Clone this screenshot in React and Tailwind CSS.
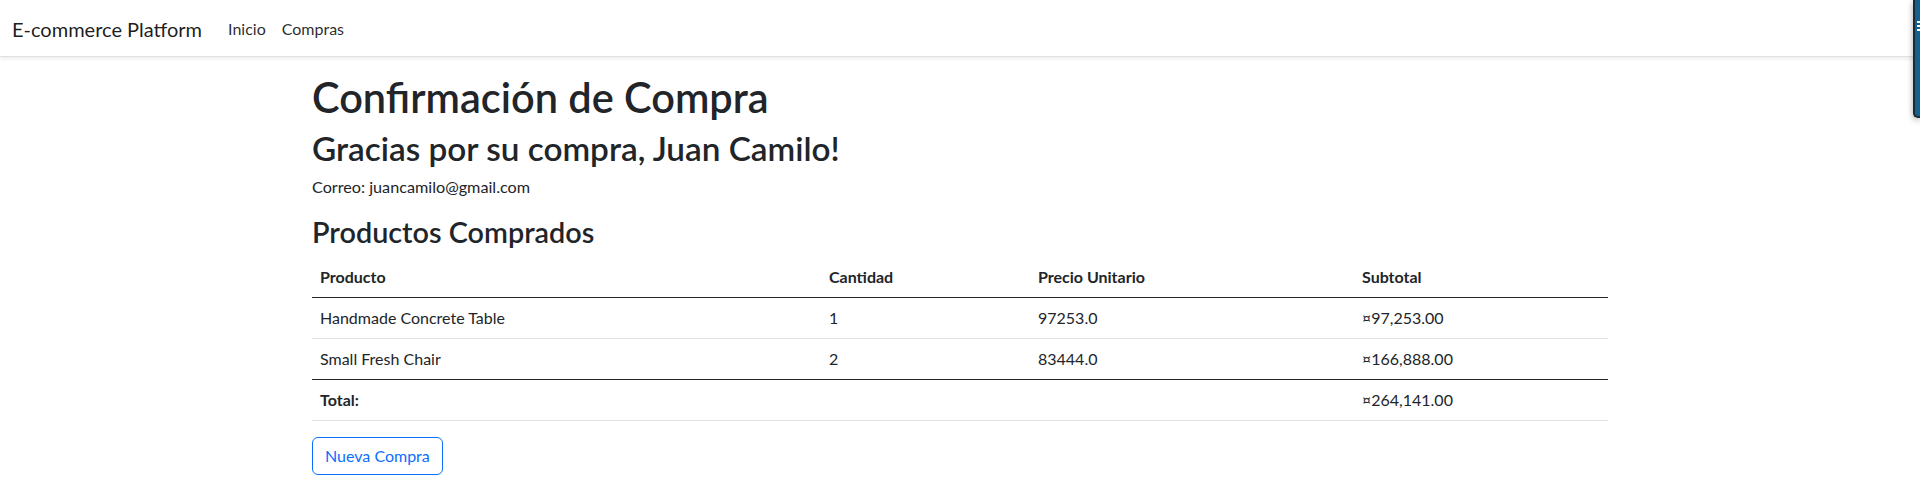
import React from 'react';

const items = [
    { name: 'Handmade Concrete Table', qty: 1, price: '97253.0', subtotal: '¤97,253.00' },
    { name: 'Small Fresh Chair', qty: 2, price: '83444.0', subtotal: '¤166,888.00' },
];

function Navbar() {
    return (
        <nav className="h-[57px] bg-white border-b border-[#dee2e6] shadow-[0_0.125rem_0.25rem_rgba(0,0,0,0.075)] relative z-10">
            <div className="h-full px-3 pt-[2px] flex items-center">
                <a className="text-[20px] text-[rgba(0,0,0,0.9)] mr-[18px] leading-[30px]">E-commerce Platform</a>
                <a className="text-[16px] text-[rgba(0,0,0,0.85)] px-2">Inicio</a>
                <a className="text-[16px] text-[rgba(0,0,0,0.85)] px-2">Compras</a>
            </div>
        </nav>
    );
}

function App() {
    return (
        <div className="min-h-[495px] bg-white text-[#212529] relative overflow-hidden" style={{ fontFamily: 'Lato, "Noto Sans", sans-serif' }}>
            <Navbar />

            {/* extension tab in the corner */}
            <div className="absolute top-0 right-0 w-[7px] h-[118px] bg-[#11608f] border-l-2 border-b-2 border-[#1b2a33] rounded-bl-[5px] shadow-[0_2px_6px_rgba(0,0,0,0.35)] z-20">
                <div className="mt-[21px] ml-[2px] flex flex-col gap-[2px]">
                    <div className="h-[2px] w-[4px] bg-white" />
                    <div className="h-[2px] w-[4px] bg-white" />
                    <div className="h-[2px] w-[4px] bg-white" />
                </div>
            </div>

            <main className="w-[1320px] mx-auto px-3 pt-[16px]">
                <h1 className="text-[41.5px] leading-[48px] font-semibold mb-2">Confirmación de Compra</h1>
                <h2 className="text-[33.3px] leading-[38px] font-semibold mb-2">Gracias por su compra, Juan Camilo!</h2>
                <p className="text-[16.2px] leading-6 mb-4">Correo: juancamilo@gmail.com</p>

                <h3 className="text-[28.8px] leading-[34px] font-semibold mb-2">Productos Comprados</h3>
                <table className="w-full text-[16px] leading-6 mb-4 border-collapse">
                    <thead>
                        <tr className="border-b border-[#212529]">
                            <th className="text-left font-bold px-2 py-2 w-[509px]">Producto</th>
                            <th className="text-left font-bold px-2 py-2 w-[209px]">Cantidad</th>
                            <th className="text-left font-bold px-2 py-2 w-[324px]">Precio Unitario</th>
                            <th className="text-left font-bold px-2 py-2">Subtotal</th>
                        </tr>
                    </thead>
                    <tbody>
                        {items.map((item, i) => (
                            <tr key={item.name} className={i === items.length - 1 ? 'border-b border-[#212529]' : 'border-b border-[#dee2e6]'}>
                                <td className="px-2 py-2">{item.name}</td>
                                <td className="px-2 py-2">{item.qty}</td>
                                <td className="px-2 py-2">{item.price}</td>
                                <td className="px-2 py-2">{item.subtotal}</td>
                            </tr>
                        ))}
                    </tbody>
                    <tfoot>
                        <tr className="border-b border-[#dee2e6]">
                            <td className="px-2 py-2 font-bold">Total:</td>
                            <td className="px-2 py-2"></td>
                            <td className="px-2 py-2"></td>
                            <td className="px-2 py-2">¤264,141.00</td>
                        </tr>
                    </tfoot>
                </table>

                <button className="border border-[#0d6efd] text-[#0d6efd] rounded-[6px] px-3 py-[6px] text-[16px] leading-6">
                    Nueva Compra
                </button>
            </main>
        </div>
    );
}

export default App;
